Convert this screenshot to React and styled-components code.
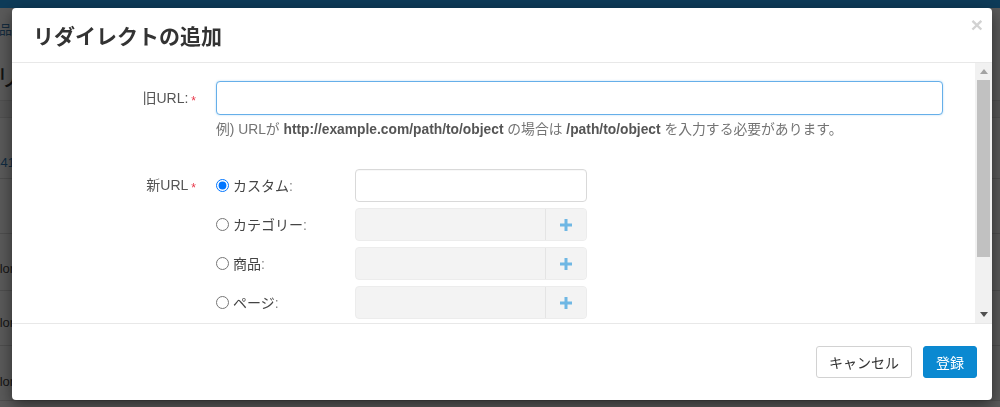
import React from "react";
import styled, { createGlobalStyle } from "styled-components";

const GlobalStyle = createGlobalStyle`
  html, body { margin: 0; padding: 0; }
  body {
    font-family: "Liberation Sans", "Noto Sans CJK JP", sans-serif;
    font-size: 14px;
    color: #333;
    background: #fff;
    overflow: hidden;
  }
  * { box-sizing: border-box; }
`;

/* ---------- page behind the dialog ---------- */

const Page = styled.div`
  width: 1000px;
  height: 407px;
  overflow: hidden;
`;

const TopBar = styled.div`
  height: 8px;
  background: #27a8fb;
`;

const Content = styled.div`
  margin-left: -14px;
`;

const Breadcrumb = styled.div`
  height: 44px;
  padding-top: 14px;
  font-size: 13px;
  line-height: 16px;
  color: #3a7bb0;
`;

const PageTitle = styled.h1`
  margin: 0;
  height: 48px;
  padding-left: 10px;
  font-family: "Noto Sans CJK JP", sans-serif;
  font-weight: 400;
  font-size: 24px;
  line-height: 48px;
  color: #333;
`;

const Table = styled.div`
  display: flex;
  flex-direction: column;
`;

const HeadRow = styled.div`
  height: 18px;
  background: #f3f3f3;
  border-top: 1px solid #e0e0e0;
  border-bottom: 1px solid #e0e0e0;
`;

const Row = styled.div`
  display: flex;
  align-items: center;
  height: ${(p) => p.$h}px;
  border-bottom: 1px solid #dcdcdc;
  font-size: 13px;
  color: ${(p) => (p.$link ? "#2f7ab8" : "#444")};
  padding-top: ${(p) => p.$shift || 0}px;
`;

/* ---------- dialog ---------- */

const Backdrop = styled.div`
  position: fixed;
  inset: 0;
  background: rgba(0, 0, 0, 0.65);
`;

const Dialog = styled.div`
  position: fixed;
  left: 12px;
  top: 8px;
  width: 980px;
  height: 392px;
  background: #fff;
  border-radius: 4px;
  box-shadow: 0 5px 15px rgba(0, 0, 0, 0.5);
  display: flex;
  flex-direction: column;
  overflow: hidden;
`;

const Header = styled.div`
  display: flex;
  align-items: flex-start;
  height: 55px;
  flex: none;
  padding: 0 9px 0 21px;
  border-bottom: 1px solid #e8e8e8;
`;

const Title = styled.h4`
  flex: 1;
  margin: 0;
  font-family: "Noto Sans CJK JP", sans-serif;
  font-size: 21px;
  font-weight: 700;
  line-height: 54px;
  color: #333;
`;

const Close = styled.button`
  margin-top: 6px;
  padding: 0;
  border: 0;
  background: none;
  font-family: "Liberation Sans", sans-serif;
  font-size: 21px;
  font-weight: 700;
  line-height: 1;
  color: #d2d2d2;
  cursor: pointer;
`;

const Body = styled.div`
  display: flex;
  height: 260px;
  flex: none;
`;

const BodyInner = styled.div`
  flex: 1;
  min-width: 0;
  overflow: hidden;
  padding: 18px 32px 0 0;
`;

/* classic scrollbar: arrow, thumb, arrow */
const ScrollBar = styled.div`
  width: 17px;
  flex: none;
  display: flex;
  flex-direction: column;
  background: #f1f1f1;
`;

const ScrollArrow = styled.div`
  height: 17px;
  flex: none;
  display: flex;
  align-items: center;
  justify-content: center;
`;

const ScrollTrack = styled.div`
  flex: 1;
  padding: 0 2px;
`;

const ScrollThumb = styled.div`
  height: 177px;
  background: #c1c1c1;
`;

const FormGroup = styled.div`
  display: grid;
  grid-template-columns: 184px 1fr;
  column-gap: 20px;
  margin-bottom: ${(p) => p.$mb || 0}px;
`;

const Label = styled.label`
  text-align: right;
  font-size: 14px;
  line-height: ${(p) => p.$lh || 34}px;
  color: #555;
  white-space: nowrap;
`;

const Required = styled.span`
  margin-left: 3px;
  font-size: 12px;
  vertical-align: -2px;
  color: #e8384a;
`;

const TextInput = styled.input`
  display: block;
  width: 100%;
  height: ${(p) => p.$h || 34}px;
  padding: 6px 12px;
  font: inherit;
  border: 1px solid ${(p) => (p.$focus ? "#66afe9" : "#d9d9d9")};
  border-radius: 4px;
  background: #fff;
  box-shadow: ${(p) =>
    p.$focus ? "0 0 2px rgba(102, 175, 233, 0.5)" : "inset 0 1px 1px rgba(0,0,0,.03)"};
  outline: none;
`;

const Help = styled.p`
  margin: 6px 0 0;
  font-size: 13.8px;
  line-height: 18px;
  color: #737373;
  white-space: nowrap;

  b {
    color: #555;
  }
`;

const Choices = styled.div`
  display: flex;
  flex-direction: column;
  gap: 6px;
`;

const Choice = styled.div`
  display: grid;
  grid-template-columns: 139px 232px;
  align-items: center;
  height: 33px;
`;

const RadioLabel = styled.label`
  display: flex;
  align-items: center;
  gap: 4px;
  font-size: 14px;
  line-height: 20px;
  color: #444;
  white-space: nowrap;

  input {
    margin: 0;
    width: 13px;
    height: 13px;
  }
`;

const Colon = styled.span`
  color: #888;
`;

const PickerGroup = styled.div`
  display: flex;
  height: 33px;
  border: 1px solid #ececec;
  border-radius: 4px;
  background: #f3f3f3;
  overflow: hidden;
`;

const PickerField = styled.div`
  flex: 1;
`;

const PickerAddon = styled.button`
  width: 41px;
  flex: none;
  display: flex;
  align-items: center;
  justify-content: center;
  padding: 0;
  border: 0;
  border-left: 1px solid #e4e4e4;
  background: #f3f3f3;
  cursor: pointer;
`;

const Select = styled.select`
  width: 232px;
  height: 34px;
  font: inherit;
  border: 1px solid #d9d9d9;
  border-radius: 4px;
  background: #fff;
`;

const Footer = styled.div`
  display: flex;
  justify-content: flex-end;
  gap: 11px;
  flex: none;
  padding: 22px 15px 0;
  border-top: 1px solid #e8e8e8;
  height: 77px;
`;

const Button = styled.button`
  height: 32px;
  padding: 0 12px;
  font-family: "Noto Sans CJK JP", sans-serif;
  font-size: 14px;
  line-height: 20px;
  border-radius: 3px;
  cursor: pointer;
  border: 1px solid ${(p) => (p.$primary ? "#0a87cf" : "#d2d2d2")};
  background: ${(p) => (p.$primary ? "#0b89d1" : "#fff")};
  color: ${(p) => (p.$primary ? "#fff" : "#333")};
`;

const PlusIcon = () => (
  <svg width="12" height="12" viewBox="0 0 12 12">
    <rect x="4.5" y="0" width="3" height="12" fill="#6fb7e4" />
    <rect x="0" y="4.5" width="12" height="3" fill="#6fb7e4" />
  </svg>
);

const Triangle = ({ down, color }) => (
  <svg width="8" height="5" viewBox="0 0 8 5">
    <polygon points={down ? "0,0 8,0 4,5" : "4,0 8,5 0,5"} fill={color} />
  </svg>
);

const pickers = ["カテゴリー", "商品", "ページ"];

export default function App() {
  return (
    <>
      <GlobalStyle />
      <Page>
        <TopBar />
        <Content>
          <Breadcrumb>商品</Breadcrumb>
          <PageTitle>リダ</PageTitle>
          <Table>
            <HeadRow />
            <Row $h={61} $link $shift={28}>1341</Row>
            <Row $h={55} />
            <Row $h={57} $shift={12}>color</Row>
            <Row $h={55} $shift={8}>color</Row>
            <Row $h={55} $shift={16}>color</Row>
          </Table>
        </Content>
      </Page>

      <Backdrop />
      <Dialog role="dialog">
        <Header>
          <Title>リダイレクトの追加</Title>
          <Close aria-label="閉じる">×</Close>
        </Header>

        <Body>
          <BodyInner>
            <FormGroup $mb={30}>
              <Label>
                旧URL:<Required>*</Required>
              </Label>
              <div>
                <TextInput $focus />
                <Help>
                  例) URLが <b>http://example.com/path/to/object</b> の場合は{" "}
                  <b>/path/to/object</b> を入力する必要があります。
                </Help>
              </div>
            </FormGroup>

            <FormGroup $mb={20}>
              <Label $lh={33}>
                新URL<Required>*</Required>
              </Label>
              <Choices>
                <Choice>
                  <RadioLabel>
                    <input type="radio" name="target" defaultChecked />
                    <span>
                      カスタム<Colon>:</Colon>
                    </span>
                  </RadioLabel>
                  <TextInput $h={33} />
                </Choice>
                {pickers.map((name) => (
                  <Choice key={name}>
                    <RadioLabel>
                      <input type="radio" name="target" />
                      <span>
                        {name}
                        <Colon>:</Colon>
                      </span>
                    </RadioLabel>
                    <PickerGroup>
                      <PickerField />
                      <PickerAddon aria-label="選択">
                        <PlusIcon />
                      </PickerAddon>
                    </PickerGroup>
                  </Choice>
                ))}
              </Choices>
            </FormGroup>

            <FormGroup>
              <Label>ステータス:</Label>
              <div>
                <Select defaultValue="301">
                  <option value="301">301 Moved Permanently</option>
                  <option value="302">302 Found</option>
                </Select>
              </div>
            </FormGroup>
          </BodyInner>

          <ScrollBar>
            <ScrollArrow>
              <Triangle color="#a3a3a3" />
            </ScrollArrow>
            <ScrollTrack>
              <ScrollThumb />
            </ScrollTrack>
            <ScrollArrow>
              <Triangle down color="#505050" />
            </ScrollArrow>
          </ScrollBar>
        </Body>

        <Footer>
          <Button>キャンセル</Button>
          <Button $primary>登録</Button>
        </Footer>
      </Dialog>
    </>
  );
}
